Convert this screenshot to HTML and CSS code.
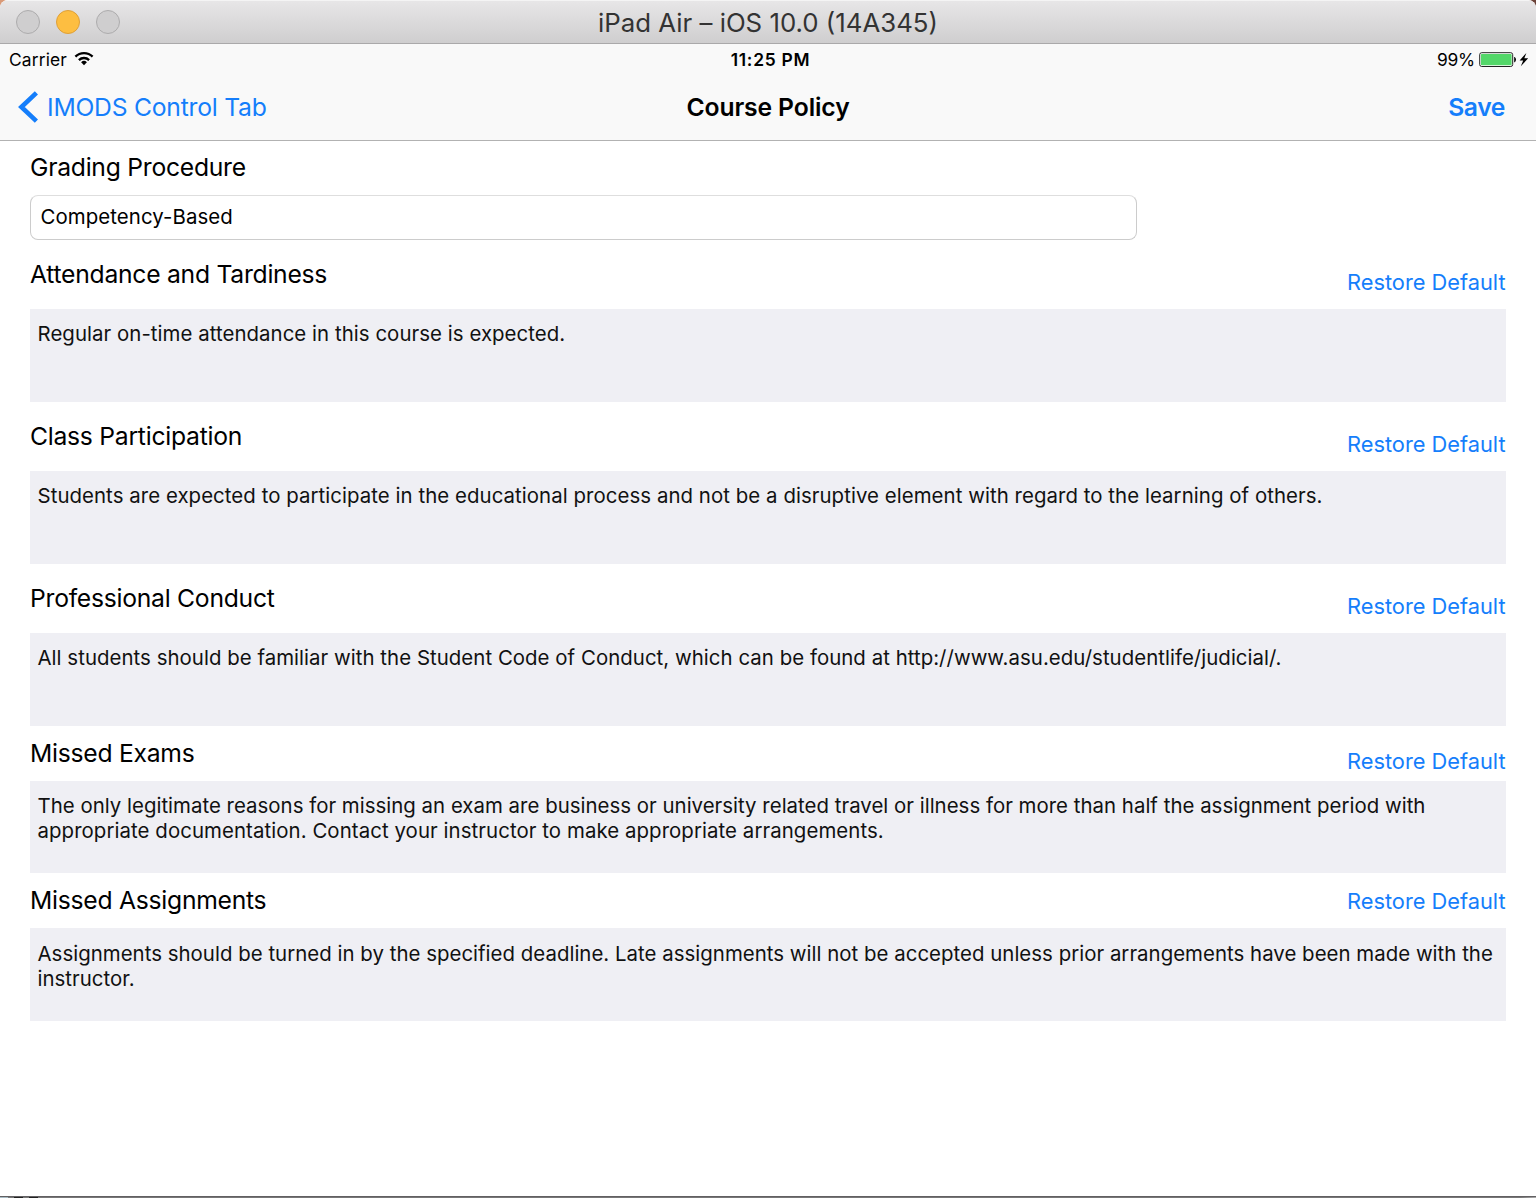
FILE: index.html
```html
<!DOCTYPE html>
<html lang="en">
<head>
<meta charset="utf-8">
<title>Course Policy</title>
<link rel="stylesheet" href="styles.css">
</head>
<body>
<div class="window">
  <div class="titlebar">
    <div class="lights"><span class="light"></span><span class="light light-minimize"></span><span class="light"></span></div>
    <div class="window-title"><span>iPad Air – iOS 10.0 (14A345)</span></div>
    <div></div>
  </div>
  <header class="chrome">
    <div class="status">
      <div class="carrier"><span>Carrier</span>
        <svg class="wifi" width="20" height="15" viewBox="0 0 20 15"><g fill="none" stroke="#000" stroke-width="2.3"><path d="M1.4 5.6a12.2 12.2 0 0 1 17.2 0"/><path d="M4.9 9.1a7.3 7.3 0 0 1 10.2 0"/></g><path d="M10 14.2 7.1 11.3a4.1 4.1 0 0 1 5.8 0z"/></svg>
      </div>
      <div class="clock">11:25 PM</div>
      <div class="power"><span>99%</span>
        <svg class="battery" width="51" height="16" viewBox="0 0 51 16"><rect x=".7" y=".7" width="33" height="13.8" rx="2" fill="#fff" stroke="#222" stroke-width="1"/><rect x="1.9" y="1.9" width="30.7" height="11.4" rx=".8" fill="#53d769"/><path d="M35.2 5h.6q1.2 1 1.2 2.6t-1.2 2.6h-.6z"/><path d="m47.4.9-6.8 7.5h3.6l-2.4 5.9 7.4-8h-3.9z"/></svg>
      </div>
    </div>
    <nav class="nav">
      <a class="back"><svg width="20" height="32" viewBox="0 0 20 32"><path d="M18.4 1.8 3.4 16 18.4 30.2" fill="none" stroke="#157efb" stroke-width="4.6"/></svg><span>IMODS Control Tab</span></a>
      <h1 class="nav-title">Course Policy</h1>
      <a class="save">Save</a>
    </nav>
  </header>
  <main class="content">
    <section class="policy">
      <h2 class="label label-first">Grading Procedure</h2>
      <div class="field">Competency-Based</div>
    </section>
    <section class="policy">
      <div class="head"><h2 class="label">Attendance and Tardiness</h2><a class="restore">Restore Default</a></div>
      <div class="box"><span class="text-attendance">Regular on-time attendance in this course is expected.</span></div>
    </section>
    <section class="policy">
      <div class="head"><h2 class="label">Class Participation</h2><a class="restore">Restore Default</a></div>
      <div class="box"><span class="text-participation">Students are expected to participate in the educational process and not be a disruptive element with regard to the learning of others.</span></div>
    </section>
    <section class="policy">
      <div class="head"><h2 class="label">Professional Conduct</h2><a class="restore">Restore Default</a></div>
      <div class="box"><span class="text-conduct">All students should be familiar with the Student Code of Conduct, which can be found at http://www.asu.edu/studentlife/judicial/.</span></div>
    </section>
    <section class="policy">
      <div class="head head-exams"><h2 class="label">Missed Exams</h2><a class="restore">Restore Default</a></div>
      <div class="box box-exams"><span class="text-exams">The only legitimate reasons for missing an exam are business or university related travel or illness for more than half the assignment period with</span><br><span class="text-exams-end">appropriate documentation. Contact your instructor to make appropriate arrangements.</span></div>
    </section>
    <section class="policy">
      <div class="head head-assignments"><h2 class="label">Missed Assignments</h2><a class="restore">Restore Default</a></div>
      <div class="box box-assignments"><span class="text-assignments">Assignments should be turned in by the specified deadline. Late assignments will not be accepted unless prior arrangements have been made with the</span><br><span class="text-assignments">instructor.</span></div>
    </section>
  </main>
  <div class="edge"><i></i><i></i><i></i></div>
</div>
</body>
</html>
```
FILE: styles.css
```css
* { box-sizing: border-box; }
body {
  margin: 0;
  background: linear-gradient(90deg, #d99a78 50%, #6b4238 50%);
  font-family: Inter, "Liberation Sans", sans-serif;
  color: #000;
}
.window {
  width: 1536px;
  height: 1198px;
  display: flex;
  flex-direction: column;
  background: #fff;
  border-radius: 8px 8px 0 0;
  overflow: hidden;
  white-space: nowrap;
}
.titlebar {
  height: 44px;
  flex: none;
  display: grid;
  grid-template-columns: 1fr auto 1fr;
  background: linear-gradient(#e7e6e7, #cfcecf);
  border-top: 1px solid #f4f4f4;
  border-bottom: 1px solid #aaa9aa;
}
.lights { display: flex; gap: 16px; padding: 9px 0 0 16px; }
.light {
  width: 24px;
  height: 24px;
  border: 1px solid #adacad;
  border-radius: 50%;
  background: #cfcecf;
}
.light-minimize { background: #fdbe41; border-color: #dfa038; }
.window-title { font-size: 25.8px; line-height: 44px; color: #333; }
.chrome {
  height: 97px;
  flex: none;
  background: #f9f9f9;
  border-bottom: 1px solid #b2b2b2;
}
.status {
  display: grid;
  grid-template-columns: 1fr auto 1fr;
  height: 30px;
  font-size: 17.4px;
  line-height: 31px;
}
.carrier { display: flex; gap: 7px; padding-left: 9px; letter-spacing: .15px; }
.wifi { margin-top: 7px; }
.clock { font-weight: 600; padding-left: 5px; letter-spacing: .75px; }
.power { display: flex; justify-content: flex-end; gap: 4px; padding-right: 6px; letter-spacing: -.2px; }
.battery { margin-top: 8px; }
.nav {
  display: grid;
  grid-template-columns: 1fr auto 1fr;
  height: 66px;
  font-size: 24.7px;
  line-height: 66px;
}
.back { display: flex; align-items: center; gap: 9px; padding-left: 18px; color: #157efb; letter-spacing: -.24px; }
.nav-title { margin: 0; font-size: inherit; font-weight: 600; letter-spacing: -.12px; }
.save { text-align: right; padding-right: 31px; font-weight: 600; letter-spacing: -.4px; color: #157efb; }
.content { flex: 1; padding: 0 30px; }
.label { margin: 0; font-size: 24.7px; font-weight: 400; line-height: 30px; letter-spacing: -.26px; }
.label-first { padding-top: 11px; height: 54px; }
.field {
  width: 1107px;
  height: 45px;
  padding-left: 9.5px;
  border: 1px solid #ccc;
  border-top-color: #dedede;
  border-radius: 8px;
  font-size: 20.4px;
  line-height: 42px;
  letter-spacing: .09px;
}
.head { display: flex; justify-content: space-between; height: 69px; padding-top: 19px; }
.restore { padding: 8px .4px 0 0; font-size: 21.8px; line-height: 30px; color: #157efb; }
.head-exams { height: 55px; padding-top: 12px; }
.head-assignments { height: 55px; padding-top: 12px; }
.head-assignments .restore { padding-top: 1px; }
.box {
  height: 93px;
  padding: 12px 0 0 7.5px;
  background: #efeff4;
  font-size: 20.4px;
  line-height: 25.5px;
  color: #111;
}
.box-exams { height: 92px; line-height: 25.4px; }
.box-assignments { padding-top: 12.5px; }
.text-attendance { letter-spacing: .055px; }
.text-participation { letter-spacing: .062px; }
.text-conduct { letter-spacing: .044px; }
.text-exams { letter-spacing: .023px; }
.text-exams-end { letter-spacing: .075px; }
.text-assignments { letter-spacing: .031px; }
.edge {
  height: 2px;
  flex: none;
  display: flex;
  gap: 6px;
  background: linear-gradient(90deg, #777 0 99%, #aaa);
  border-top: 1px solid #626062;
}
.edge i { width: 9px; height: 2px; background: #222; }
.edge i:first-child { width: 8px; background: #a9bcc5; }
```
